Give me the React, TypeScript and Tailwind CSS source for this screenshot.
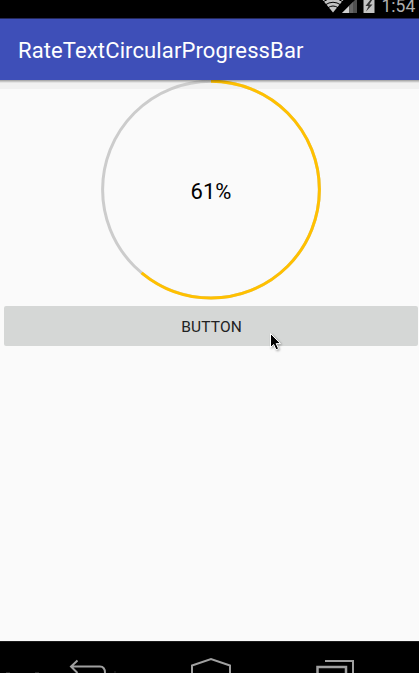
const RADIUS = 108.4;
const LENGTH = 2 * Math.PI * RADIUS;

function StatusBar() {
  return (
    <div className="relative h-[18px] shrink-0 overflow-hidden bg-black">
      <svg className="absolute left-0 top-0" width="419" height="18" viewBox="0 0 419 18">
        <path d="M321 -2 Q333 -9 345 -2 L333 12.5Z" fill="#c4c4c4" />
        <g fill="none" stroke="#000" strokeWidth="1">
          <path d="M322.5 2 Q333 -5 343.5 2" />
          <path d="M325 5 Q333 -0.5 341 5" />
          <path d="M327.5 8 Q333 4 338.5 8" />
        </g>
        <path d="M342 13 L357 -2 V13Z" fill="#505050" />
        <path d="M342 13 L349 6 V13Z" fill="#d0d0d0" />
        <path d="M349.5 13V5.5L353 2V13Z" fill="#686868" />
        <path d="M363.5 -1h11v14h-11z" fill="#c4c4c4" />
        <path d="M371 -1l-5.5 7h3l-2.5 5.5 6.5-7h-3.2l3.5-5.5z" fill="#333" />
      </svg>
      <span className="absolute left-[381.5px] top-0 text-[17.5px] leading-[12px] text-[#b0b0b0]">1:54</span>
    </div>
  );
}

function CircularProgress({ value }: { value: number }) {
  return (
    <div className="relative ml-[101px] flex h-[220px] w-[220px] items-center justify-center">
      <svg className="absolute inset-0" width="220" height="220" viewBox="0 0 220 220" fill="none" strokeWidth="3">
        <circle cx="110" cy="109.6" r={RADIUS} stroke="#cccccc" />
        <circle
          cx="110"
          cy="109.6"
          r={RADIUS}
          stroke="#ffc000"
          strokeDasharray={`${(LENGTH * value) / 100} ${LENGTH}`}
          transform="rotate(-90 110 109.6)"
        />
      </svg>
      <span className="relative top-[2px] text-[22px] leading-none text-black">{value}%</span>
    </div>
  );
}

function NavigationBar() {
  return (
    <div className="h-8 shrink-0 overflow-hidden border-t border-[#1c1c1c] bg-black">
      <svg width="419" height="31" viewBox="0 642 419 31" fill="none" stroke="#a0a0a0" strokeWidth="2">
        <path d="M77.5 660.5L71 666.5L77.5 673M71 666.5H100Q105 666.5 105 673" />
        <path d="M192 675V665.5L211 659L230 665.5V675" />
        <path d="M325 661H353V675" />
        <path d="M317.5 675V667H346V675" strokeWidth="2.5" />
        <path d="M6 672.5h4M35 672.5h4M114 672h2" stroke="#292929" strokeWidth="1" />
      </svg>
    </div>
  );
}

export default function App() {
  return (
    <div className="relative flex h-[673px] w-[419px] flex-col overflow-hidden bg-[#fafafa] font-['Roboto','Noto_Sans',sans-serif]">
      <StatusBar />
      <header className="flex h-[62px] shrink-0 items-center border-t border-[#24285c] bg-[#3e4fb8] pl-[18px] pt-[2px]">
        <h1 className="text-[22px] leading-none tracking-[0.12px] text-white">RateTextCircularProgressBar</h1>
      </header>
      <main className="relative flex-1">
        <div className="absolute inset-x-0 top-0 h-[9px] bg-[#f1f1f1]" />
        <CircularProgress value={61} />
        <div className="absolute inset-x-0 top-0 h-[3px] bg-linear-to-b from-black/35 to-transparent" />
        <button className="ml-[4.4px] mt-[6px] flex h-10 w-[413.4px] items-center justify-center rounded-[2px] bg-[#d5d7d6] pl-px pt-[3px] text-[15.5px] leading-none tracking-[0.15px] text-[#222]">
          BUTTON
        </button>
      </main>
      <NavigationBar />
      <svg className="absolute left-[268px] top-[332px] drop-shadow-[1px_1px_1px_rgba(0,0,0,0.35)]" width="16" height="20" viewBox="0 0 16 20">
        <path d="M2.5 1.5V15.5L5.7 12.5L8 17.8L10.6 16.7L8.2 11.6H12.5Z" fill="#000" stroke="#fff" strokeWidth="1" />
      </svg>
    </div>
  );
}
